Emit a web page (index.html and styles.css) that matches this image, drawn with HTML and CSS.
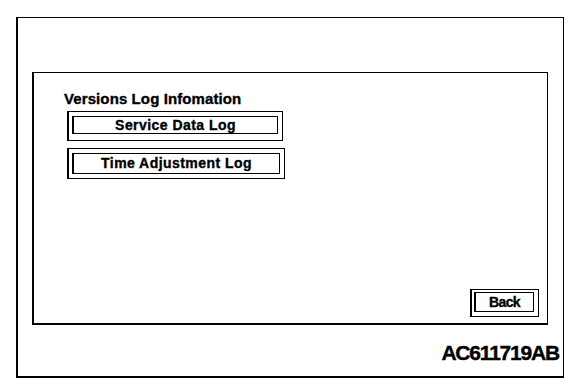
FILE: index.html
```html
<!DOCTYPE html>
<html>
<head>
<meta charset="utf-8">
<link rel="stylesheet" href="styles.css">
</head>
<body>
<div class="frame">
  <div class="panel">
    <div class="title">Versions Log Infomation</div>
    <div class="btn btn-wide btn-first">
      <div class="btn-inner">Service Data Log</div>
    </div>
    <div class="btn btn-wide btn-second">
      <div class="btn-inner">Time Adjustment Log</div>
    </div>
    <div class="btn btn-back">
      <div class="btn-inner">Back</div>
    </div>
  </div>
  <div class="code">AC611719AB</div>
</div>
</body>
</html>
```

FILE: styles.css
```css
html, body {
  margin: 0;
  padding: 0;
  background: #fff;
}
body {
  font-family: "Liberation Sans", Arial, sans-serif;
  color: #000;
  width: 576px;
  height: 388px;
  overflow: hidden;
}
.frame {
  box-sizing: border-box;
  width: 548px;
  height: 361px;
  margin: 17px 0 0 16px;
  border-style: solid;
  border-color: #000;
  border-width: 1px 1px 2px 2px;
  padding: 54px 0 0 14px;
  display: flex;
  flex-direction: column;
}
.panel {
  box-sizing: border-box;
  height: 253px;
  margin-right: 15px;
  border-style: solid;
  border-color: #000;
  border-width: 1px 1px 2px 2px;
  padding: 17px 8px 6px 30px;
  display: flex;
  flex-direction: column;
  align-items: flex-start;
}
.title {
  font-weight: bold;
  font-size: 15px;
  line-height: 17px;
  letter-spacing: 0.1px;
  -webkit-text-stroke: 0.35px #000;
}
.btn {
  box-sizing: border-box;
  border: 1px solid #000;
  border-left-width: 2px;
}
.btn-inner {
  box-sizing: border-box;
  border: 1px solid #000;
  border-left-width: 2px;
  text-align: center;
  font-weight: bold;
  font-size: 14px;
  line-height: 16px;
  -webkit-text-stroke: 0.35px #000;
}
.btn-wide {
  margin-left: 3px;
}
.btn-wide .btn-inner {
  letter-spacing: 0.45px;
}
.btn-first {
  margin-top: 4px;
  width: 216px;
  height: 30px;
  padding: 4px 4px 6px 3px;
}
.btn-first .btn-inner {
  height: 18px;
}
.btn-second {
  margin-top: 7px;
  width: 218px;
  height: 31px;
  padding: 4px 4px 4px 3px;
}
.btn-second .btn-inner {
  height: 21px;
  line-height: 19px;
}
.btn-back {
  margin-top: auto;
  align-self: flex-end;
  width: 69px;
  height: 28px;
  padding: 2px 4px 4px 2px;
}
.btn-back .btn-inner {
  height: 20px;
  line-height: 18px;
  letter-spacing: -0.6px;
}
.code {
  margin-top: 16px;
  text-align: right;
  padding-right: 4px;
  font-weight: bold;
  font-size: 21px;
  line-height: 24px;
  letter-spacing: -1.2px;
  -webkit-text-stroke: 0.4px #000;
}
```
